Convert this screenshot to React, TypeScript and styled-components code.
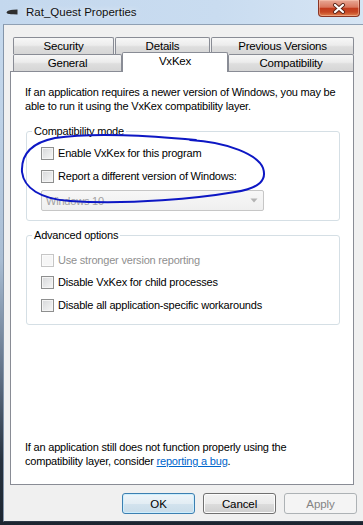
import styled, { createGlobalStyle } from 'styled-components';

const GlobalStyle = createGlobalStyle`
  html, body {
    margin: 0;
    padding: 0;
    background: #f0f0f0;
  }
  body {
    font-family: "Liberation Sans", Arial, sans-serif;
    font-size: 11px;
    letter-spacing: -0.2px;
    color: #000;
  }
  * { box-sizing: border-box; }
`;

const Window = styled.div`
  position: relative;
  width: 363px;
  height: 525px;
  display: flex;
  flex-direction: column;
  overflow: hidden;
  background: linear-gradient(
    180deg,
    #c8dbef 0px,
    #bed2e7 120px,
    #a9bdd3 260px,
    #5d6d82 380px,
    #27323f 460px,
    #1c2530 525px
  );
`;

const TitleBar = styled.div`
  height: 24px;
  display: flex;
  align-items: center;
  padding-left: 6px;
  background: linear-gradient(90deg, #c4d8ee 0%, #c9dcf0 60%, #d6e5f4 100%);
`;

const TitleText = styled.span`
  margin-left: 8px;
  font-size: 11.5px;
  letter-spacing: 0;
  color: #101010;
  text-shadow: 0 0 6px rgba(255, 255, 255, 0.8);
`;

const CloseButton = styled.div`
  margin-left: auto;
  margin-right: 3px;
  align-self: flex-start;
  width: 42px;
  height: 17px;
  display: flex;
  align-items: center;
  justify-content: center;
  border: 1px solid #8a3524;
  border-top: none;
  border-radius: 0 0 4px 4px;
  background: linear-gradient(
    180deg,
    #e8a896 0%,
    #d9775e 45%,
    #c23b1d 52%,
    #c64724 75%,
    #e1824f 100%
  );
  box-shadow: inset 0 0 0 1px rgba(255, 210, 190, 0.45);
`;

const Client = styled.div`
  flex: 1;
  margin-left: 3px;
  margin-bottom: 3px;
  display: flex;
  flex-direction: column;
  padding: 12px 6px 0 6px;
  background: #f0f0f0;
  border-top: 1px solid #8fa0b4;
  border-left: 1px solid #8495aa;
  border-bottom: 1px solid #2e3947;
`;

const TabRow = styled.div<{ $gap: number }>`
  display: flex;
  margin-left: 3px;
  gap: ${p => p.$gap}px;
  position: relative;
`;

const Tab = styled.div<{ $w: number; $active?: boolean }>`
  width: ${p => p.$w}px;
  height: ${p => (p.$active ? 20 : 17)}px;
  margin-top: ${p => (p.$active ? -2 : 0)}px;
  margin-bottom: ${p => (p.$active ? -3 : 0)}px;
  display: flex;
  align-items: center;
  justify-content: center;
  padding-bottom: ${p => (p.$active ? 3 : 0)}px;
  border: 1px solid #898c95;
  border-bottom: none;
  border-radius: 2px 2px 0 0;
  font-size: 11.5px;
  color: #000;
  position: relative;
  z-index: ${p => (p.$active ? 2 : 0)};
  background: ${p =>
    p.$active
      ? '#ffffff'
      : 'linear-gradient(180deg, #f7f7f7 0%, #ececec 45%, #dedede 55%, #d6d6d6 100%)'};
`;

const Panel = styled.div`
  width: 344px;
  height: 414px;
  background: #fff;
  border: 1px solid #898c95;
  display: flex;
  flex-direction: column;
  padding: 13px 13px 16px 14px;
  position: relative;
  z-index: 1;
`;

const Para = styled.p`
  margin: 0;
  line-height: 14px;
`;

const BottomPara = styled(Para)`
  margin-top: auto;
`;

const Link = styled.a`
  color: #0066cc;
  text-decoration: underline;
`;

const Group = styled.fieldset<{ $top: number; $bottom: number }>`
  margin: ${p => p.$top}px 0 0 1px;
  padding: 0 10px ${p => p.$bottom}px 14px;
  border: 1px solid #d5dfe5;
  border-radius: 3px;
  min-width: 0;
  display: flex;
  flex-direction: column;
`;

const Legend = styled.legend`
  padding: 0 2px;
  margin-left: -9px;
  line-height: 15px;
  color: #000;
`;

const CheckRow = styled.label<{ $mt: number; $disabled?: boolean }>`
  display: flex;
  align-items: center;
  gap: 4px;
  height: 16px;
  margin-top: ${p => p.$mt}px;
  color: ${p => (p.$disabled ? '#8f8f8f' : '#000')};
`;

const Box = styled.span<{ $disabled?: boolean }>`
  width: 13px;
  height: 13px;
  flex: none;
  border: 1px solid ${p => (p.$disabled ? '#c6c6c6' : '#8e8f8f')};
  background: ${p =>
    p.$disabled
      ? '#f6f6f6'
      : 'linear-gradient(135deg, #d6d7d9 0%, #e6e7e8 50%, #f7f7f7 100%)'};
  box-shadow: inset 0 0 0 1px ${p => (p.$disabled ? '#fbfbfb' : '#f4f4f4')};
`;

const Combo = styled.div`
  margin-top: 6px;
  width: 223px;
  height: 21px;
  display: flex;
  align-items: center;
  justify-content: space-between;
  padding: 0 5px 0 4px;
  border: 1px solid #c6c6c6;
  border-radius: 2px;
  background: linear-gradient(180deg, #f7f7f7, #efefef);
  color: #a2a2a2;
`;

const ButtonRow = styled.div`
  display: flex;
  justify-content: flex-end;
  gap: 8px;
  padding: 8px 0 0 0;
`;

const Button = styled.button<{ $variant?: 'default' | 'disabled' }>`
  width: 73px;
  height: 21px;
  padding: 0;
  font: inherit;
  font-size: 11.5px;
  letter-spacing: -0.1px;
  border-radius: 3px;
  border: 1px solid
    ${p =>
      p.$variant === 'default' ? '#3c7fb1' : p.$variant === 'disabled' ? '#adb2b5' : '#707070'};
  color: ${p => (p.$variant === 'disabled' ? '#838383' : '#000')};
  background: ${p =>
    p.$variant === 'default'
      ? 'linear-gradient(180deg, #eef5fa 0%, #e3edf4 50%, #d3e3ee 50%, #c9dce9 100%)'
      : p.$variant === 'disabled'
      ? '#f4f4f4'
      : 'linear-gradient(180deg, #f2f2f2 0%, #ebebeb 50%, #dddddd 50%, #cfcfcf 100%)'};
  box-shadow: inset 0 0 0 1px
    ${p => (p.$variant === 'disabled' ? '#f4f4f4' : p.$variant === 'default' ? '#cdeefd' : '#fcfcfc')};
`;

const Scribble = styled.svg`
  position: absolute;
  left: 0;
  top: 0;
  pointer-events: none;
  z-index: 5;
`;

function Check({ label, mt, disabled }: { label: string; mt: number; disabled?: boolean }) {
  return (
    <CheckRow $mt={mt} $disabled={disabled}>
      <Box $disabled={disabled} />
      <span>{label}</span>
    </CheckRow>
  );
}

export default function App() {
  return (
    <>
      <GlobalStyle />
      <Window>
        <TitleBar>
          <svg width="12" height="6" viewBox="0 0 12 6">
            <path d="M0.5 3.5 C1 1.8 4 1 7 0.8 L11.5 0.6 L11.5 5.4 L7 5.3 C4 5.2 1 5 0.5 3.5 Z" fill="#2e2e2e" />
          </svg>
          <TitleText>Rat_Quest Properties</TitleText>
          <CloseButton>
            <svg width="14" height="11" viewBox="0 0 14 11">
              <path d="M3 2 L11 9 M11 2 L3 9" stroke="#5a2418" strokeWidth="4" strokeLinecap="round" />
              <path d="M3 2 L11 9 M11 2 L3 9" stroke="#ffffff" strokeWidth="2.2" strokeLinecap="round" />
            </svg>
          </CloseButton>
        </TitleBar>
        <Client>
          <TabRow $gap={1}>
            <Tab $w={101}>Security</Tab>
            <Tab $w={95}>Details</Tab>
            <Tab $w={143}>Previous Versions</Tab>
          </TabRow>
          <TabRow $gap={0}>
            <Tab $w={109}>General</Tab>
            <Tab $w={106} $active>VxKex</Tab>
            <Tab $w={126}>Compatibility</Tab>
          </TabRow>
          <Panel>
            <Para>
              If an application requires a newer version of Windows, you may be able to run it using
              the VxKex compatibility layer.
            </Para>
            <Group $top={11} $bottom={9}>
              <Legend>Compatibility mode</Legend>
              <Check label="Enable VxKex for this program" mt={6} />
              <Check label="Report a different version of Windows:" mt={7} />
              <Combo>
                <span>Windows 10</span>
                <svg width="8" height="5" viewBox="0 0 8 5">
                  <path d="M0.5 0.5 H7.5 L4 4.5 Z" fill="#b3b3b3" />
                </svg>
              </Combo>
            </Group>
            <Group $top={7} $bottom={11}>
              <Legend>Advanced options</Legend>
              <Check label="Use stronger version reporting" mt={9} disabled />
              <Check label="Disable VxKex for child processes" mt={6} />
              <Check label="Disable all application-specific workarounds" mt={7} />
            </Group>
            <BottomPara>
              If an application still does not function properly using the
              <br />
              compatibility layer, consider <Link>reporting a bug</Link>.
            </BottomPara>
          </Panel>
          <ButtonRow>
            <Button $variant="default">OK</Button>
            <Button>Cancel</Button>
            <Button $variant="disabled">Apply</Button>
          </ButtonRow>
        </Client>
        <Scribble width="363" height="525" viewBox="0 0 363 525">
          <path
            d="M190 140 C228 142 258 155 263 168 C267 180 260 188 235 192 C200 198 130 205 70 201 C40 199 24 188 22 172 C21 155 30 143 55 138 C95 132 150 136 196 140"
            fill="none"
            stroke="#0d17c4"
            strokeWidth="2"
            strokeLinecap="round"
          />
        </Scribble>
      </Window>
    </>
  );
}
